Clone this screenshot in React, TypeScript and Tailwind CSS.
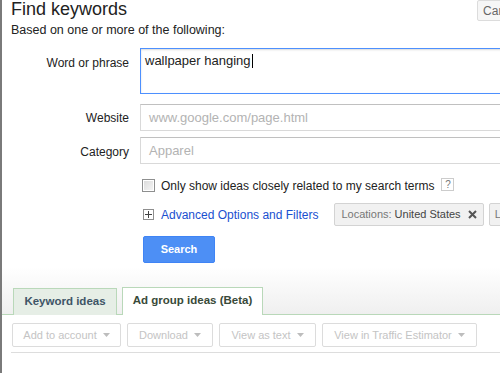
import React from "react";

function Caret() {
  return (
    <svg width="7" height="4" viewBox="0 0 7 4" className="ml-[6px] shrink-0">
      <path d="M0 0 L7 0 L3.5 4 Z" fill="#bdbdbd" />
    </svg>
  );
}

function ToolButton({ label, width }: { label: string; width: string }) {
  return (
    <div
      className={`flex h-[24px] ${width} shrink-0 items-center justify-center whitespace-nowrap rounded-[2px] border border-[#dcdcdc] bg-white text-[11px] text-[#c4c4c4]`}
    >
      <span>{label}</span>
      <Caret />
    </div>
  );
}

export default function App() {
  return (
    <div
      className="relative h-[373px] w-[500px] overflow-hidden border-l-2 border-[#7a7a7a] bg-white"
      style={{ fontFamily: '"Liberation Sans", Arial, sans-serif' }}
    >
      {/* 上部フォーム */}
      <div className="w-[600px] pl-[9px]">
        <div className="flex items-start">
          <h1 className="shrink-0 text-[18px] leading-[19px] text-[#222]">Find keywords</h1>
          <div className="ml-[350px] flex h-[21px] w-[60px] shrink-0 items-center rounded-[2px] border border-[#dcdcdc] bg-[#f6f6f6] pl-[5px] text-[12px] text-[#666]">
            Cancel
          </div>
        </div>
        <p className="mt-[2px] text-[12.5px] leading-[15px] text-[#222]">
          Based on one or more of the following:
        </p>

        {/* Word or phrase */}
        <div className="mt-[10px] flex gap-[11px]">
          <div className="w-[118px] pt-[8px] text-right text-[12px] leading-[15px] text-[#222]">
            Word or phrase
          </div>
          <div className="flex h-[46px] flex-1 border border-[#4d90fe] px-[4px] pt-[4px] text-[13px] leading-[16px] text-[#222] shadow-[inset_0_1px_2px_rgba(0,0,0,0.15)]">
            <span>wallpaper hanging</span>
            <span className="ml-[1px] mt-[1px] h-[14px] w-[1px] bg-black" />
          </div>
        </div>

        {/* Website */}
        <div className="mt-[10px] flex items-center gap-[11px]">
          <div className="w-[118px] pt-[2px] text-right text-[12px] leading-[15px] text-[#222]">
            Website
          </div>
          <div className="flex h-[27px] flex-1 items-center border border-[#d9d9d9] border-t-[#c0c0c0] pl-[8px] text-[13px] text-[#b3b3b3]">
            www.google.com/page.html
          </div>
        </div>

        {/* Category */}
        <div className="mt-[6px] flex items-center gap-[11px]">
          <div className="w-[118px] pt-[3px] text-right text-[12px] leading-[15px] text-[#222]">
            Category
          </div>
          <div className="flex h-[27px] flex-1 items-center border border-[#d9d9d9] border-t-[#c0c0c0] pl-[8px] text-[13px] text-[#b3b3b3]">
            Apparel
          </div>
        </div>

        {/* オプション */}
        <div className="ml-[129px] whitespace-nowrap pl-[3px]">
          <div className="mt-[15px] flex h-[13px] items-center">
            <div className="-ml-px flex h-[13px] w-[13px] shrink-0 items-center justify-center border border-[#8e8f8f] bg-white">
              <div className="h-[9px] w-[9px] bg-gradient-to-br from-[#dcdcdc] to-[#f4f4f4]" />
            </div>
            <span className="ml-[6px] pt-[1px] text-[12px] text-[#222]">
              Only show ideas closely related to my search terms
            </span>
            <div className="ml-[7px] -mt-[3px] flex h-[13px] w-[13px] shrink-0 items-center justify-center border border-[#cccccc] text-[10px] text-[#777]">
              ?
            </div>
          </div>

          <div className="mt-[11px] flex items-center">
            <div className="flex h-[11px] w-[11px] shrink-0 items-center justify-center border border-[#8e8e8e] bg-white">
              <svg width="7" height="7" viewBox="0 0 7 7">
                <path d="M0 3.5 H7 M3.5 0 V7" stroke="#444" strokeWidth="1" />
              </svg>
            </div>
            <span className="ml-[7px] text-[12px] text-[#1a4fd0]">Advanced Options and Filters</span>
            <div className="ml-[16px] flex h-[23px] shrink-0 items-center rounded-[2px] border border-[#d3d3d3] bg-[#f1f1f1] pl-[6px] pr-[6px] text-[11px]">
              <span className="text-[#777]">Locations:</span>
              <span className="ml-[3px] text-[#444]">United States</span>
              <svg width="9" height="9" viewBox="0 0 9 9" className="ml-[7px]">
                <path d="M1 1 L8 8 M8 1 L1 8" stroke="#555" strokeWidth="2" />
              </svg>
            </div>
            <div className="ml-[5px] flex h-[23px] shrink-0 items-center rounded-[2px] border border-[#d3d3d3] bg-[#f1f1f1] pl-[5px] pr-[6px] text-[11px] text-[#777]">
              Languages: English
            </div>
          </div>

          <div className="mt-[10px] flex h-[27px] w-[72px] items-center justify-center rounded-[2px] border border-[#3f84f5] bg-[#4d8ff5] text-[11px] font-bold text-white">
            Search
          </div>
        </div>
      </div>

      {/* タブ */}
      <div className="mt-[4px] flex h-[48px] items-end gap-[5px] border-b border-[#b9d8b9] bg-gradient-to-b from-white to-[#efefef] pl-[11px]">
        <div className="-mb-px flex h-[27px] w-[104px] items-center justify-center border border-b-0 border-[#b9d8b9] bg-[#e6eee6] text-[11.5px] font-bold text-[#3e5566]">
          Keyword ideas
        </div>
        <div className="-mb-px flex h-[28px] w-[141px] items-center justify-center border border-b-0 border-[#b9d8b9] bg-white pb-[1px] text-[11.5px] font-bold text-[#394a39]">
          Ad group ideas (Beta)
        </div>
      </div>

      {/* ツールバー */}
      <div className="mt-[8px] flex gap-[6px] pl-[10px]">
        <ToolButton label="Add to account" width="w-[109px]" />
        <ToolButton label="Download" width="w-[86px]" />
        <ToolButton label="View as text" width="w-[97px]" />
        <ToolButton label="View in Traffic Estimator" width="w-[155px]" />
      </div>
      <div className="ml-[9px] mt-[5px] h-px bg-[#dddddd]" />
    </div>
  );
}
